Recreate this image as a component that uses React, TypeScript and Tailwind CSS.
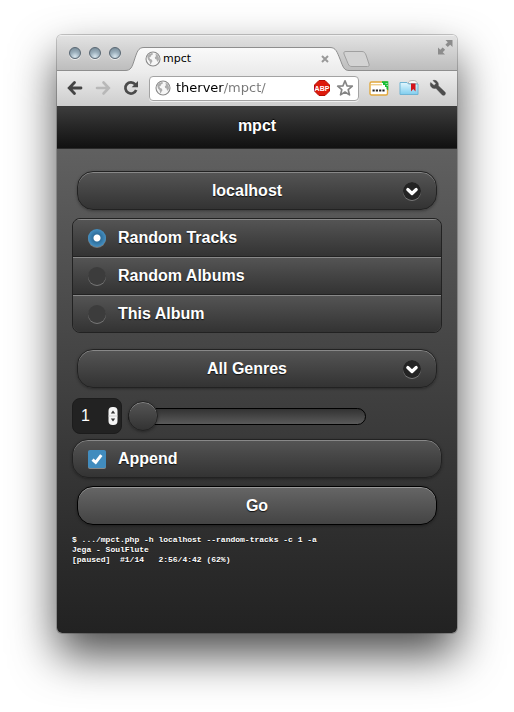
import { useState, type ReactNode } from "react";

const raised =
  "bg-linear-to-b from-[#555] to-[#333] border border-[#222] shadow-[inset_0_1px_0_#888,0_1px_3px_rgba(0,0,0,0.35)]";
const label = "text-base font-bold text-white [text-shadow:0_1px_1px_#111]";

function Globe({ className }: { className: string }) {
  return (
    <svg viewBox="0 0 16 16" className={className} aria-hidden="true">
      <circle cx="8" cy="8" r="7" fill="#f6f6f6" stroke="#8a8a8a" strokeWidth="1.1" />
      <path d="M2.200 5.500 4 3.200 6.800 2 8.200 2.800 7.200 4 6 4.600 5.600 6 4.200 6.400 5.200 8 7 8.800 7.400 10.600 6.200 12 6 13.800 5 12.400 4.600 10.200 3 8.400Z" fill="#adadad" />
      <path d="M10.400 2.800 12.400 3.800 13.800 6 14 8.400 13 10.400 12 10.600 11.600 8.600 10.200 8 9.800 6.200 11 5.200Z" fill="#adadad" />
    </svg>
  );
}

function TabStrip() {
  return (
    <div className="flex h-9 items-end bg-linear-to-b from-[#e3e3e3] to-[#bcbcbc] shadow-[inset_0_-1px_0_#8e8e8e,inset_0_1px_0_#efefef]">
      <div className="flex gap-2 self-center pl-3">
        {["Close window", "Minimize window", "Zoom window"].map((name) => (
          <button
            key={name}
            aria-label={name}
            className="size-3 rounded-full border border-[#596773] bg-[radial-gradient(circle_at_50%_85%,#d8e6ee_0,#9cb0bd_45%,#71838f_100%)] shadow-[0_1px_0_#eee]"
          />
        ))}
      </div>
      <div className="relative ml-1 flex h-6 w-56 items-center px-5">
        <svg viewBox="0 0 224 24" preserveAspectRatio="none" className="absolute inset-0 size-full" aria-hidden="true">
          <defs>
            <linearGradient id="tab" x2="0" y2="1">
              <stop stopColor="#fafafa" />
              <stop offset="1" stopColor="#ececec" />
            </linearGradient>
          </defs>
          <path
            d="M0 23.500C6 23.500 7 20 9 14C12 5 13 .5 19 .5H205C211 .5 212 5 215 12C218 20 219 23.500 224 23.500V24H0Z"
            fill="url(#tab)"
          />
          <path
            d="M0 23.500C6 23.500 7 20 9 14C12 5 13 .5 19 .5H205C211 .5 212 5 215 12C218 20 219 23.500 224 23.500"
            fill="none"
            stroke="#8e8e8e"
          />
        </svg>
        <Globe className="relative size-4" />
        <span className="relative ml-0.5 flex-1 font-['DejaVu_Sans',sans-serif] text-[11px] text-black">mpct</span>
        <button aria-label="Close tab" className="relative">
          <svg viewBox="0 0 8 8" className="size-2">
            <path d="M1 1 7 7M7 1 1 7" stroke="#999" strokeWidth="2" />
          </svg>
        </button>
      </div>
      <button aria-label="New tab" className="mb-1 -ml-1.5">
        <svg viewBox="0 0 28 16" className="h-4 w-7">
          <path
            d="M3 .5H19C21 .5 22 1.500 23 4L26 13C26.500 14.700 26 15.500 24.500 15.500H9C7 15.500 6 15 5 12.500L1 3C.5 1.300 1 .5 3 .5Z"
            fill="#d3d3d3"
            stroke="#a0a0a0"
          />
        </svg>
      </button>
      <button aria-label="Full screen" className="mr-1 mb-4 ml-auto">
        <svg viewBox="0 0 16 16" className="size-4">
          <path
            d="M8.500 1H15.500V8L13.200 5.700 10.800 8.100 8.400 5.700 10.800 3.300ZM1 8.500 3.300 10.800 5.700 8.400 8.100 10.800 5.700 13.200 8 15.500H1Z"
            fill="#8c8c8c"
          />
        </svg>
      </button>
    </div>
  );
}

function Toolbar() {
  return (
    <div className="flex h-9 items-center border-b border-[#3a3a3a] bg-linear-to-b from-[#ededed] to-[#cdcdcd] px-2.5 pb-px">
      <button aria-label="Back">
        <svg viewBox="0 0 16 16" className="size-4">
          <path d="M7.500 2.500 2.200 8 7.500 13.500M3 8H14" fill="none" stroke="#444" strokeWidth="2.800" strokeLinecap="round" />
        </svg>
      </button>
      <button aria-label="Forward" className="ml-3" disabled>
        <svg viewBox="0 0 16 16" className="size-4">
          <path d="M8.500 2.500 13.800 8 8.500 13.500M13 8H2" fill="none" stroke="#b8b8b8" strokeWidth="2.600" strokeLinecap="round" />
        </svg>
      </button>
      <button aria-label="Reload" className="ml-3">
        <svg viewBox="0 0 16 16" className="size-4">
          <path d="M12.300 4.300A5.600 5.600 0 1 0 13.200 10" fill="none" stroke="#4a4a4a" strokeWidth="2.700" />
          <path d="M15 1V7.300H8.700Z" fill="#4a4a4a" />
        </svg>
      </button>
      <div className="ml-2.5 flex h-[25px] flex-1 items-center rounded-sm border border-[#a3a3a3] bg-white px-1 shadow-[0_1px_0_#eee]">
        <Globe className="mx-px size-4" />
        <input
          aria-label="Address"
          defaultValue="therver/mpct/"
          className="ml-1 w-0 flex-1 bg-linear-to-r from-black from-[48px] to-[#777] to-[48px] bg-clip-text font-['DejaVu_Sans',sans-serif] text-[13px] text-transparent caret-black outline-none"
        />
        <button aria-label="AdBlock Plus">
          <svg viewBox="0 0 16 16" className="size-4">
            <path d="M5 .5H11L15.500 5V11L11 15.500H5L.5 11V5Z" fill="#dd1a0c" stroke="#b30d05" />
            <text x="8" y="10.600" textAnchor="middle" className="fill-white font-['Liberation_Sans',sans-serif] text-[7px] font-bold">
              ABP
            </text>
          </svg>
        </button>
        <button aria-label="Bookmark this page" className="ml-1.5">
          <svg viewBox="0 0 18 18" className="size-[18px]">
            <path
              d="M9 1.800 11 6.800 16.300 7.200 12.200 10.600 13.500 15.900 9 13 4.500 15.900 5.800 10.600 1.700 7.200 7 6.800Z"
              fill="#fff"
              stroke="#858585"
              strokeWidth="1.700"
              strokeLinejoin="round"
            />
          </svg>
        </button>
      </div>
      <button aria-label="Password extension" className="ml-2.5">
        <svg viewBox="0 0 20 16" className="h-4 w-5">
          <rect x="1" y="2" width="17.500" height="13" rx="1.500" fill="#fff" stroke="#e2a83c" strokeWidth="1.400" />
          <path d="M1.500 4.800H13" stroke="#e8b95c" />
          <path d="M3.500 10.500H16" stroke="#222" strokeWidth="2.200" strokeDasharray="2.200 1.100" />
          <path d="M13 1.300H19.300V10.500L17.500 9V7H16V5H14V3H13Z" fill="#18bd36" />
          <path d="M16.500 3.500H18.500M17.500 5.500H19" stroke="#b6f0be" strokeWidth=".8" />
        </svg>
      </button>
      <button aria-label="Bookmarks extension" className="ml-2.5">
        <svg viewBox="0 0 20 18" className="h-[18px] w-5">
          <defs>
            <linearGradient id="folder" x2="0" y2="1">
              <stop stopColor="#e4f7fe" />
              <stop offset="1" stopColor="#7fcdee" />
            </linearGradient>
          </defs>
          <path d="M9 4.500C9.500 2.300 11 1.500 14 1.500S18 2.500 18.500 5Z" fill="#fafafa" stroke="#b5b5b5" />
          <path d="M1 3.500H8L9.500 5H19V15.500H1Z" fill="url(#folder)" stroke="#6fb4d4" />
          <path d="M12 4.500H16.500V12.500L14.200 10 12 12.500Z" fill="#d3121b" />
        </svg>
      </button>
      <button aria-label="Settings" className="ml-2.5">
        <svg viewBox="0 0 18 18" className="size-[18px]">
          <path
            d="M4 1.500 7 4.600 5.100 6.600 1.700 3.500C.4 6.800 3 10.300 6.900 9.200L13.300 15.900C15.300 17.300 17.500 15 15.900 13L9.300 6.700C9.900 3.500 7.400 .6 4 1.500Z"
            fill="#4d4d4d"
            stroke="#4d4d4d"
            strokeWidth=".5"
          />
        </svg>
      </button>
    </div>
  );
}

function SelectButton({ name, options }: { name: string; options: string[] }) {
  return (
    <div className="relative mx-[5px]">
      <select
        aria-label={name}
        className={`${raised} ${label} block h-[39px] w-full appearance-none rounded-2xl pr-5 [text-align-last:center]`}
      >
        {options.map((option) => (
          <option key={option} className="text-black">
            {option}
          </option>
        ))}
      </select>
      <span className="pointer-events-none absolute inset-y-0 right-4 flex items-center">
        <svg viewBox="0 0 18 18" className="size-[18px] rounded-full shadow-[0_1px_0_#777]" aria-hidden="true">
          <circle cx="9" cy="9" r="9" fill="#242424" />
          <path d="M4.800 7.500 9 11.500 13.200 7.500" fill="none" stroke="#fff" strokeWidth="3.200" strokeLinejoin="round" strokeLinecap="round" />
        </svg>
      </span>
    </div>
  );
}

function Radio({ children, checked, onPick }: { children: ReactNode; checked: boolean; onPick: () => void }) {
  return (
    <label
      className={`${label} flex h-[38px] items-center gap-3 border-b border-[#222] bg-linear-to-b from-[#555] to-[#333] px-[15px] shadow-[inset_0_1px_0_#888] last:h-[37px] last:border-b-0`}
    >
      <input
        type="radio"
        name="mode"
        checked={checked}
        onChange={onPick}
        className="size-[18px] appearance-none rounded-full bg-[#3c3c3c] shadow-[0_1px_0_#777] checked:bg-[radial-gradient(circle,#fff_3px,#2f6f9c_4px,#4590c2_9px)]"
      />
      {children}
    </label>
  );
}

function CountSlider() {
  const [count, setCount] = useState(1);
  return (
    <div className="mt-2.5 flex items-center gap-1.5">
      <div className="flex h-9 w-[50px] items-center rounded-lg border border-[#1c1c1c] bg-[#222] pr-[3px] pl-2">
        <input
          type="number"
          min={1}
          max={50}
          aria-label="Count"
          value={count}
          onChange={(event) => setCount(Number(event.target.value))}
          className="w-0 flex-1 appearance-none text-base text-white outline-none [-moz-appearance:textfield] [&::-webkit-inner-spin-button]:appearance-none"
        />
        <svg viewBox="0 0 10 18" className="h-[18px] w-2.5" aria-hidden="true">
          <rect x=".5" width="9" height="18" rx="4" fill="#f4f4f4" />
          <path d="M.5 9H9.500" stroke="#d0d0d0" />
          <path d="M5 3.500 7.200 6.500H2.800ZM5 14.500 2.800 11.500H7.200Z" fill="#333" />
        </svg>
      </div>
      <input
        type="range"
        min={1}
        max={50}
        aria-label="Count slider"
        value={count}
        onChange={(event) => setCount(Number(event.target.value))}
        className="mr-[76px] h-[30px] min-w-0 flex-1 appearance-none bg-transparent [&::-webkit-slider-runnable-track]:h-[17px] [&::-webkit-slider-runnable-track]:rounded-full [&::-webkit-slider-runnable-track]:border [&::-webkit-slider-runnable-track]:border-black [&::-webkit-slider-runnable-track]:bg-linear-to-b [&::-webkit-slider-runnable-track]:from-[#333] [&::-webkit-slider-runnable-track]:to-[#5a5a5a] [&::-webkit-slider-thumb]:-mt-2 [&::-webkit-slider-thumb]:-ml-px [&::-webkit-slider-thumb]:size-[30px] [&::-webkit-slider-thumb]:appearance-none [&::-webkit-slider-thumb]:rounded-full [&::-webkit-slider-thumb]:border [&::-webkit-slider-thumb]:border-[#222] [&::-webkit-slider-thumb]:bg-linear-to-b [&::-webkit-slider-thumb]:from-[#555] [&::-webkit-slider-thumb]:to-[#333] [&::-webkit-slider-thumb]:shadow-[inset_0_1px_0_#888,0_1px_3px_rgba(0,0,0,0.35)]"
      />
    </div>
  );
}

function Page() {
  const modes = ["Random Tracks", "Random Albums", "This Album"];
  const [mode, setMode] = useState(modes[0]);
  return (
    <div className="flex flex-1 flex-col bg-linear-to-b from-[#666] to-[#222]">
      <header className="flex h-[42px] items-center justify-center border-b border-[#2a2a2a] bg-linear-to-b from-[#3c3c3c] to-[#111] pb-1">
        <h1 className="text-base font-bold text-white [text-shadow:0_-1px_1px_#000]">mpct</h1>
      </header>
      <main className="px-[15px] pt-[22px]">
        <SelectButton name="Host" options={["localhost"]} />
        <fieldset className="mt-2 overflow-hidden rounded-lg border border-[#222]">
          {modes.map((item) => (
            <Radio key={item} checked={item === mode} onPick={() => setMode(item)}>
              {item}
            </Radio>
          ))}
        </fieldset>
        <div className="mt-4">
          <SelectButton name="Genre" options={["All Genres"]} />
        </div>
        <CountSlider />
        <label className={`${raised} ${label} mt-[5px] flex h-[39px] items-center gap-3 rounded-2xl px-[15px]`}>
          <span className="grid">
            <input
              type="checkbox"
              defaultChecked
              className="peer col-start-1 row-start-1 size-[18px] appearance-none rounded-xs bg-[#3c3c3c] shadow-[0_1px_0_#888] checked:bg-[#418cbe]"
            />
            <svg
              viewBox="0 0 18 18"
              className="pointer-events-none invisible col-start-1 row-start-1 size-[18px] peer-checked:visible"
              aria-hidden="true"
            >
              <path d="M4.500 9.600 7.700 12.400 13.300 5.100" fill="none" stroke="#fff" strokeWidth="3" />
            </svg>
          </span>
          Append
        </label>
        <div className="mx-[5px] mt-2">
          <button
            className={`${label} block h-[39px] w-full rounded-2xl border border-black bg-linear-to-b from-[#666] to-[#444] shadow-[inset_0_1px_0_#999,0_1px_3px_rgba(0,0,0,0.35)]`}
          >
            Go
          </button>
        </div>
        <pre className="mt-2.5 font-['Liberation_Mono',monospace] text-[8px] leading-[10px] font-bold text-white [text-shadow:0_1px_0_#111]">
          {"$ .../mpct.php -h localhost --random-tracks -c 1 -a\nJega - SoulFlute\n[paused]  #1/14   2:56/4:42 (62%)"}
        </pre>
      </main>
    </div>
  );
}

export default function App() {
  return (
    <div className="flex min-h-screen flex-col bg-white px-[57px] pt-[35px] pb-[79px] font-['Liberation_Sans',Arial,sans-serif]">
      <div className="flex flex-1 flex-col rounded-[5px] shadow-[0_0_0_1px_rgba(0,0,0,0.2),0_22px_45px_rgba(0,0,0,0.7)]">
        <div className="flex flex-1 flex-col overflow-hidden rounded-[5px]">
          <TabStrip />
          <Toolbar />
          <Page />
        </div>
      </div>
    </div>
  );
}
